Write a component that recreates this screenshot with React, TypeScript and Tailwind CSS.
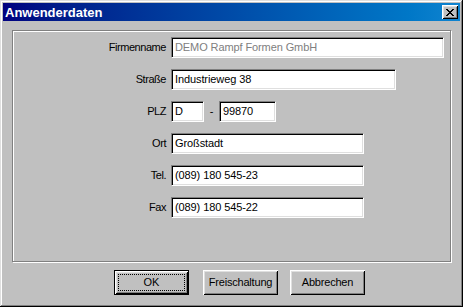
import React from 'react';

const font = { fontFamily: '"Liberation Sans", Arial, sans-serif' };

function Field({ label, children }: { label: string; children: React.ReactNode }) {
  return (
    <div className="flex items-center h-[21px]">
      <div className="w-[153px] text-right text-[11px] tracking-[-0.45px] text-black">{label}</div>
      <div className="ml-[5px] flex items-center">{children}</div>
    </div>
  );
}

function Edit({ value, width, disabled }: { value: string; width: string; disabled?: boolean }) {
  return (
    <div
      className={`${width} h-[21px] bg-white flex items-center pl-[3px] text-[11px] tracking-[-0.1px] border-t border-l border-t-[#808080] border-l-[#808080] border-b border-r border-b-[#ffffff] border-r-[#ffffff] shadow-[inset_1px_1px_#000,inset_-1px_-1px_#dfdfdf] ${
        disabled ? 'text-[#808080]' : 'text-black'
      }`}
    >
      <span className="whitespace-nowrap">{value}</span>
    </div>
  );
}

function Button({ label, isDefault }: { label: string; isDefault?: boolean }) {
  if (isDefault) {
    return (
      <div className="w-[75px] h-[25px] border border-black bg-[#c0c0c0]">
        <div className="w-full h-full shadow-[inset_1px_1px_#fff,inset_-1px_-1px_#000,inset_2px_2px_#dfdfdf,inset_-2px_-2px_#808080] p-[3px]">
          <div className="w-full h-full border border-dotted border-black flex items-center justify-center text-[11px] text-black">
            {label}
          </div>
        </div>
      </div>
    );
  }
  return (
    <div className="w-[75px] h-[25px] bg-[#c0c0c0] shadow-[inset_1px_1px_#fff,inset_-1px_-1px_#000,inset_2px_2px_#dfdfdf,inset_-2px_-2px_#808080] flex items-center justify-center text-[11px] tracking-[-0.2px] text-black">
      {label}
    </div>
  );
}

export default function App() {
  return (
    <div style={font} className="w-[463px] h-[307px] bg-[#c0c0c0] p-[3px] shadow-[inset_-1px_-1px_#000,inset_1px_1px_#dfdfdf,inset_-2px_-2px_#808080,inset_2px_2px_#fff] overflow-hidden">
      {/* title bar */}
      <div className="h-[18px] bg-gradient-to-r from-[#000080] to-[#1084d0] flex items-center justify-between pl-[2px] pr-[2px]">
        <span className="text-white font-bold text-[13px] leading-none">Anwenderdaten</span>
        <div className="w-[16px] h-[14px] bg-[#c0c0c0] shadow-[inset_1px_1px_#fff,inset_-1px_-1px_#000,inset_2px_2px_#dfdfdf,inset_-2px_-2px_#808080] flex items-center justify-center">
          <svg width="8" height="7" viewBox="0 0 8 7" shapeRendering="crispEdges">
            <path d="M0 0h2v1h-2zM6 0h2v1h-2zM1 1h2v1h-2zM5 1h2v1h-2zM2 2h4v1h-4zM3 3h2v1h-2zM2 4h4v1h-4zM1 5h2v1h-2zM5 5h2v1h-2zM0 6h2v1h-2zM6 6h2v1h-2z" fill="#000" />
          </svg>
        </div>
      </div>

      {/* client */}
      <div className="pt-[9px] pl-[9px]">
        <div className="w-[439px] h-[232px] border border-[#808080] shadow-[inset_1px_1px_#fff,1px_1px_#fff] pt-[6px] flex flex-col gap-[11px]">
          <Field label="Firmenname">
            <Edit value="DEMO Rampf Formen GmbH" width="w-[273px]" disabled />
          </Field>
          <Field label="Straße">
            <Edit value="Industrieweg 38" width="w-[225px]" />
          </Field>
          <Field label="PLZ">
            <Edit value="D" width="w-[33px]" />
            <span className="w-[15px] text-center text-[11px] text-black">-</span>
            <Edit value="99870" width="w-[57px]" />
          </Field>
          <Field label="Ort">
            <Edit value="Großstadt" width="w-[193px]" />
          </Field>
          <Field label="Tel.">
            <Edit value="(089) 180 545-23" width="w-[193px]" />
          </Field>
          <Field label="Fax">
            <Edit value="(089) 180 545-22" width="w-[193px]" />
          </Field>
        </div>

        <div className="flex mt-[8px] pl-[102px]">
          <Button label="OK" isDefault />
          <div className="ml-[14px]">
            <Button label="Freischaltung" />
          </div>
          <div className="ml-[12px]">
            <Button label="Abbrechen" />
          </div>
        </div>
      </div>
    </div>
  );
}
